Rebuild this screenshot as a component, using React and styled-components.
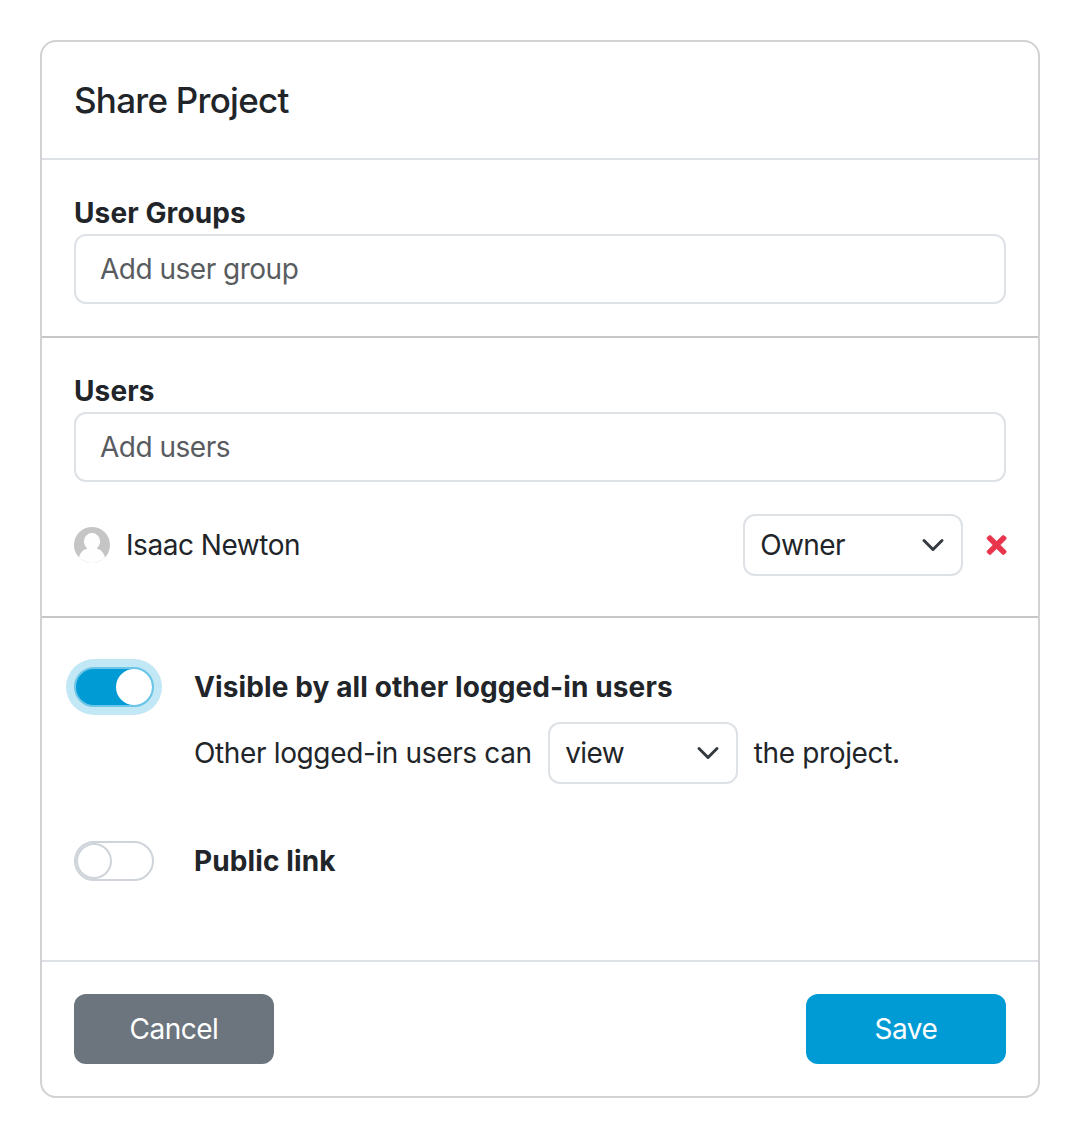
import React, { useState } from "react";
import styled, { createGlobalStyle, css } from "styled-components";
import { FaTimes } from "react-icons/fa";

const GlobalStyle = createGlobalStyle`
  *, *::before, *::after { box-sizing: border-box; }
  body {
    margin: 0;
    background: #fff;
    color: #212529;
    font-family: Inter, "Liberation Sans", sans-serif;
    font-size: 28px;
    line-height: 42px;
  }
  button, input { font: inherit; color: inherit; margin: 0; }
`;

const Page = styled.main`
  padding: 40px;
`;

const Card = styled.form`
  display: flex;
  flex-direction: column;
  border: 2px solid #d2d2d3;
  border-radius: 16px;
  background: #fff;
`;

const Header = styled.header`
  padding: 32px;
  border-bottom: 2px solid #dee2e6;
`;

const Title = styled.h1`
  margin: 0;
  font-size: 35px;
  font-weight: 500;
  line-height: 52px;
  letter-spacing: -0.74px;
`;

const Section = styled.section`
  display: flex;
  flex-direction: column;
  padding: ${(p) => p.$padding || "32px"};
  border-bottom: 2px solid ${(p) => p.$line || "#c6c7c8"};
`;

const Label = styled.label`
  font-weight: 700;
  letter-spacing: 0.11px;
  white-space: nowrap;
`;

const TextInput = styled.input`
  width: 100%;
  height: 70px;
  padding: 0 24px;
  border: 2px solid #dee2e6;
  border-radius: 12px;
  background: #fff;
  outline: none;
  letter-spacing: -0.5px;
  &::placeholder { color: #595c5f; opacity: 1; }
`;

const UserRow = styled.div`
  display: flex;
  align-items: center;
  margin-top: 32px;
`;

const Avatar = styled.svg`
  width: 36px;
  height: 36px;
  margin-right: 16px;
`;

const UserName = styled.span`
  flex: 1;
  letter-spacing: -0.46px;
`;

const SelectButton = styled.button`
  display: flex;
  align-items: center;
  justify-content: space-between;
  width: ${(p) => p.$width}px;
  height: 62px;
  padding: 0 16px 0 15.5px;
  border: 2px solid #dee2e6;
  border-radius: 12px;
  background: #fff;
  text-align: left;
  letter-spacing: -0.6px;
`;

const ChevronIcon = styled.svg`
  width: 24px;
  height: 24px;
  fill: none;
  stroke: #343a40;
  stroke-width: 2;
  stroke-linecap: round;
  stroke-linejoin: round;
`;

const RemoveButton = styled.button`
  display: flex;
  margin-left: 24px;
  padding: 0 0 1px;
  border: 0;
  background: none;
  color: #e9354b;
  svg {
    width: 19.25px;
    height: 28px;
    overflow: visible;
    stroke: currentColor;
    stroke-width: 10px;
  }
`;

const Option = styled.div`
  display: grid;
  grid-template-columns: 80px 1fr;
  column-gap: 40px;
  align-items: start;
  & + & { margin-top: 56px; }
`;

const OptionBody = styled.div`
  display: flex;
  flex-direction: column;
  gap: 14px;
`;

const Sentence = styled.div`
  display: flex;
  align-items: center;
  gap: 16px;
  white-space: nowrap;
  letter-spacing: -0.36px;
`;

const Switch = styled.button`
  display: flex;
  width: 80px;
  height: 40px;
  margin-top: 1px;
  padding: 0;
  border: 2px solid #ced4da;
  border-radius: 20px;
  background: #fff;
  outline: none;
  ${(p) =>
    p.$on &&
    css`
      justify-content: flex-end;
      border-color: #6bc5e6;
      background: #009bd5;
      box-shadow: 0 0 0 8px #c3e8f5;
    `}
`;

const Knob = styled.span`
  width: 36px;
  height: 36px;
  border: 2px solid ${(p) => (p.$on ? "#fff" : "#ced4da")};
  border-radius: 50%;
  background: #fff;
`;

const Footer = styled.footer`
  display: flex;
  justify-content: space-between;
  padding: 32px;
`;

const ActionButton = styled.button`
  width: 200px;
  height: 70px;
  border: 0;
  border-radius: 12px;
  color: #fff;
  background: ${(p) => (p.$primary ? "#009bd5" : "#6c757d")};
  letter-spacing: -0.5px;
`;

function Select({ value, width }) {
  return (
    <SelectButton type="button" $width={width}>
      {value}
      <ChevronIcon viewBox="0 0 16 16" aria-hidden="true">
        <path d="m2 5 6 6 6-6" />
      </ChevronIcon>
    </SelectButton>
  );
}

function Toggle({ on, onToggle, label }) {
  return (
    <Switch type="button" role="switch" aria-checked={on} aria-label={label} $on={on} onClick={onToggle}>
      <Knob $on={on} />
    </Switch>
  );
}

export default function App() {
  const [visible, setVisible] = useState(true);
  const [linked, setLinked] = useState(false);

  return (
    <Page>
      <GlobalStyle />
      <Card onSubmit={(e) => e.preventDefault()}>
        <Header>
          <Title>Share Project</Title>
        </Header>

        <Section>
          <Label htmlFor="groups">User Groups</Label>
          <TextInput id="groups" placeholder="Add user group" />
        </Section>

        <Section $padding="32px 32px 40px">
          <Label htmlFor="users">Users</Label>
          <TextInput id="users" placeholder="Add users" />
          <UserRow>
            <Avatar viewBox="0 0 36 36" aria-hidden="true">
              <defs>
                <clipPath id="avatar-clip">
                  <circle cx="18" cy="18" r="18" />
                </clipPath>
              </defs>
              <g clipPath="url(#avatar-clip)">
                <rect width="36" height="36" fill="#c5c5c5" />
                <ellipse cx="18" cy="14.4" rx="8.1" ry="8.3" fill="#fefefe" />
                <path
                  d="M13 20h10v1.800c4 .9 6.600 3.700 8.300 9.200V36H4.700v-5c1.700-5.500 4.300-8.300 8.300-9.200z"
                  fill="#fefefe"
                />
              </g>
            </Avatar>
            <UserName>Isaac Newton</UserName>
            <Select value="Owner" width={220} />
            <RemoveButton type="button" aria-label="Remove user">
              <FaTimes />
            </RemoveButton>
          </UserRow>
        </Section>

        <Section $padding="48px 32px 78px" $line="#dee2e6">
          <Option>
            <Toggle on={visible} onToggle={() => setVisible(!visible)} label="Visible by all other logged-in users" />
            <OptionBody>
              <Label as="span">Visible by all other logged-in users</Label>
              <Sentence>
                <span>Other logged-in users can</span>
                <Select value="view" width={190} />
                <span>the project.</span>
              </Sentence>
            </OptionBody>
          </Option>
          <Option>
            <Toggle on={linked} onToggle={() => setLinked(!linked)} label="Public link" />
            <Label as="span">Public link</Label>
          </Option>
        </Section>

        <Footer>
          <ActionButton type="button">Cancel</ActionButton>
          <ActionButton type="submit" $primary>Save</ActionButton>
        </Footer>
      </Card>
    </Page>
  );
}
